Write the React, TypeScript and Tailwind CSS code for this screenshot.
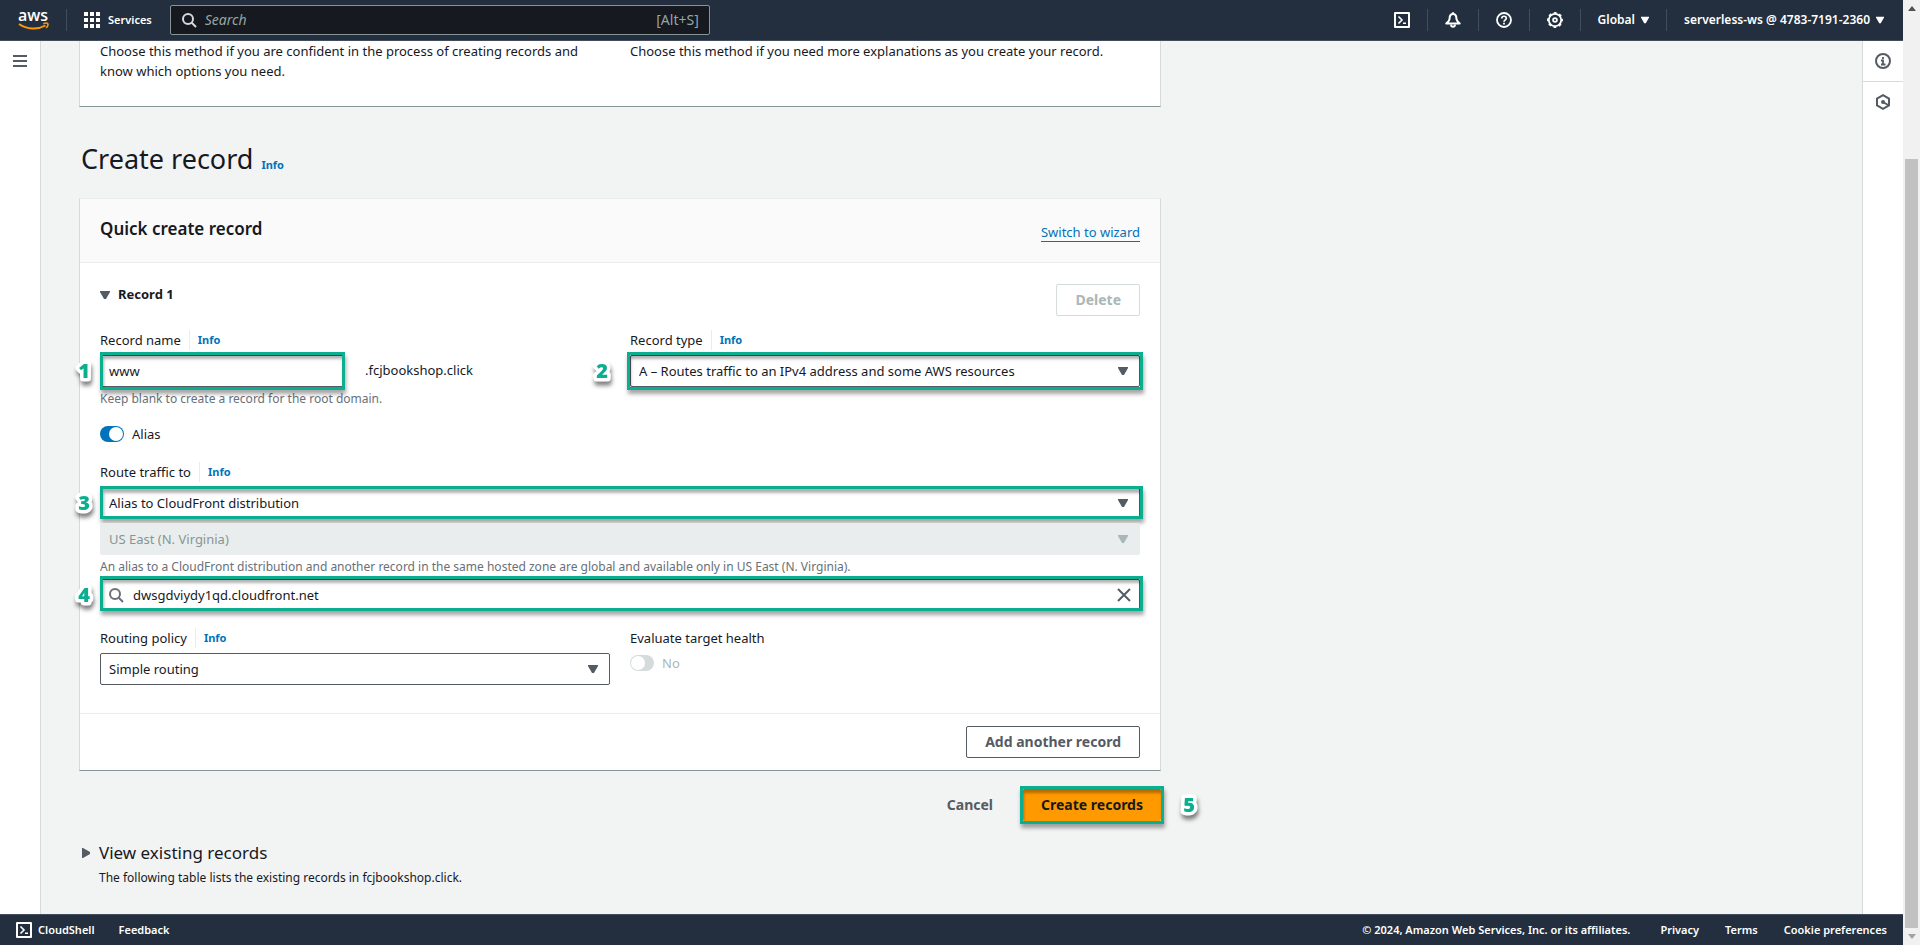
import React, { useState } from 'react';

const controlClass =
  'block h-8 w-full appearance-none rounded-[2px] border border-[#545b64] bg-white text-[13px] leading-5 text-[#16191f] outline-none';

const Caret = ({ className = 'w-2.5' }: { className?: string }) => (
  <svg viewBox="0 0 10 8" className={`h-2 ${className}`} fill="currentColor" aria-hidden="true">
    <path d="M0 0h10v1L6 8H4L0 1z" />
  </svg>
);

const SearchIcon = ({ className = '' }: { className?: string }) => (
  <svg viewBox="0 0 16 16" className={`size-4 ${className}`} fill="none" stroke="currentColor" strokeWidth="2" aria-hidden="true">
    <circle cx="7" cy="7" r="5" />
    <path d="m10.5 10.5 4.5 4.5" />
  </svg>
);

const ShellIcon = () => (
  <svg viewBox="0 0 16 16" className="size-4" fill="none" stroke="currentColor" strokeWidth="2" strokeLinejoin="round" aria-hidden="true">
    <path d="M1 1h14v14H1z" />
    <path d="M4.5 4.5 8 8l-3.5 3.5M9 11.200h3" strokeWidth="1.600" strokeLinejoin="miter" />
  </svg>
);

const BellIcon = () => (
  <svg viewBox="0 0 16 16" className="size-4" fill="none" stroke="currentColor" strokeWidth="2" strokeLinejoin="round" aria-hidden="true">
    <path d="M8 2C5.500 2 4.600 4 4.600 6.500 4.600 8.500 3 10 1.300 11.500h13.400C13 10 11.400 8.500 11.400 6.500 11.400 4 10.500 2 8 2z" />
    <path d="M8 .300V2M6 12.500c.200 3 3.800 3 4 0" />
  </svg>
);

const HelpIcon = () => (
  <svg viewBox="0 0 16 16" className="size-4" fill="none" stroke="currentColor" aria-hidden="true">
    <circle cx="8" cy="8" r="7" strokeWidth="1.800" />
    <path d="M5.800 6.400c0-2.900 4.500-2.800 4.500-.200C10.300 7.800 8 7.900 8 9.700" strokeWidth="1.700" />
    <path d="M8 10.700v1.700" strokeWidth="1.800" />
  </svg>
);

const GearIcon = () => (
  <svg viewBox="0 0 16 16" className="size-4" fill="none" stroke="currentColor" aria-hidden="true">
    <circle cx="8" cy="8" r="6.200" strokeWidth="1.800" />
    <circle cx="8" cy="8" r="7.200" strokeWidth="1.500" strokeDasharray="2.830 2.825" strokeDashoffset="1.400" />
    <circle cx="8" cy="8" r="1.900" strokeWidth="1.800" />
  </svg>
);

const AwsLogo = () => (
  <svg viewBox="0 0 32 36" className="h-9 w-8 overflow-visible" role="img" aria-label="AWS">
    <text x="0" y="19" fill="#fff" fontSize="16" fontWeight="600" fontFamily='"Open Sans", sans-serif'>aws</text>
    <path d="M1 22c8 5.500 18.500 6 26.500 1.500" fill="none" stroke="#f90" strokeWidth="2" />
    <path d="M25.300 21.700c2-.800 4-.800 4.500-.100.400.800-.200 3-1.600 4.500" fill="none" stroke="#f90" strokeWidth="1.500" />
  </svg>
);

const Divider = () => <span className="h-[22px] w-px bg-[#414d5c]" />;

function Badge({ value, className }: { value: number; className: string }) {
  return (
    <svg viewBox="0 0 24 32" className={`absolute h-8 w-6 overflow-visible drop-shadow-[1px_4px_2px_rgba(0,0,0,0.5)] ${className}`}>
      <text
        x="12"
        y="23"
        textAnchor="middle"
        fontFamily='"Open Sans", sans-serif'
        fontSize="20"
        fontWeight="800"
        fill="#0bae8f"
        stroke="#fff"
        strokeWidth="7"
        strokeLinejoin="round"
        paintOrder="stroke"
      >
        {value}
      </text>
    </svg>
  );
}

function Highlight({ className }: { className: string }) {
  return (
    <span
      className={`pointer-events-none absolute border-3 border-[#0bae8f] shadow-[1px_4px_4px_rgba(0,0,0,0.35),inset_1px_4px_3px_rgba(0,0,0,0.3)] ${className}`}
    />
  );
}

function FieldLabel({ htmlFor, children, info = true }: { htmlFor: string; children: React.ReactNode; info?: boolean }) {
  return (
    <div className="mb-[5px] flex h-5 items-center text-[13px] leading-5">
      <label htmlFor={htmlFor}>{children}</label>
      {info && (
        <a href="#info" className="ml-2 border-l border-[#eaeded] pl-2 text-[11px] font-bold text-[#0073bb]">
          Info
        </a>
      )}
    </div>
  );
}

function Select({ id, value, disabled }: { id: string; value: string; disabled?: boolean }) {
  return (
    <div className="relative">
      <select
        id={id}
        disabled={disabled}
        aria-label={value}
        className={`${controlClass} px-2 disabled:border-[#eaeded] disabled:bg-[#eaeded] disabled:text-[#879596] disabled:opacity-100`}
      >
        <option>{value}</option>
      </select>
      <Caret className={`pointer-events-none absolute top-3 right-3 w-2.5 ${disabled ? 'text-[#aab7b8]' : 'text-[#545b64]'}`} />
    </div>
  );
}

const toggleClass =
  'relative h-4 w-6 appearance-none rounded-full bg-[#d5dbdb] before:absolute before:top-px before:left-px before:size-3.5 before:rounded-full before:bg-white checked:bg-[#0073bb] checked:before:left-[9px]';

function Header() {
  return (
    <header className="flex h-[41px] shrink-0 items-center border-b border-[#414d5c] bg-[#232f3e] text-xs font-semibold text-white">
      <a href="#home" className="ml-[18px]"><AwsLogo /></a>
      <span className="ml-4 flex"><Divider /></span>
      <button className="ml-[17px] flex items-center gap-2 text-[11px]">
        <svg viewBox="0 0 16 16" className="size-4" fill="currentColor" aria-hidden="true">
          {[0, 6, 12].map((y) => [0, 6, 12].map((x) => <rect key={`${x}-${y}`} x={x} y={y} width="4" height="4" />))}
        </svg>
        Services
      </button>
      <label className="ml-[18px] flex h-[30px] w-[540px] items-center rounded-[2px] border border-[#879596] bg-[#16191f] px-2.5 text-sm font-normal text-[#95a5a6]">
        <SearchIcon className="text-[#d5dbdb]" />
        <input
          aria-label="Search"
          placeholder="Search"
          className="ml-2 min-w-0 flex-1 bg-transparent outline-none placeholder:text-[#95a5a6] placeholder:italic"
        />
        <span>[Alt+S]</span>
      </label>
      <div className="ml-auto flex items-center gap-[17px] pr-[19px]">
        <button aria-label="CloudShell"><ShellIcon /></button>
        <Divider />
        <button aria-label="Notifications"><BellIcon /></button>
        <Divider />
        <button aria-label="Help"><HelpIcon /></button>
        <Divider />
        <button aria-label="Settings"><GearIcon /></button>
        <Divider />
        <button className="flex items-center gap-1.5">Global <Caret className="w-2" /></button>
        <Divider />
        <button className="flex items-center gap-1.5">serverless-ws @ 4783-7191-2360 <Caret className="w-2" /></button>
      </div>
    </header>
  );
}

function RecordForm() {
  const [name, setName] = useState('www');
  const [alias, setAlias] = useState(true);
  const [target, setTarget] = useState('dwsgdviydy1qd.cloudfront.net');

  return (
    <div className="px-5 pt-[21px] pb-7">
      <div className="flex h-8 justify-between">
        <button className="flex h-[22px] items-center gap-2 text-[13px] font-bold">
          <Caret className="w-2.5 text-[#545b64]" />
          Record 1
        </button>
        <button disabled className="rounded-[2px] border border-[#d5dbdb] px-[18px] text-sm font-bold text-[#aab7b8]">
          Delete
        </button>
      </div>

      <div className="mt-3.5 grid grid-cols-2 gap-x-5">
        <div>
          <FieldLabel htmlFor="record-name">Record name</FieldLabel>
          <div className="grid grid-cols-2 items-center gap-5">
            <div className="relative">
              <input id="record-name" value={name} onChange={(e) => setName(e.target.value)} className={`${controlClass} px-2`} />
              <Highlight className="-top-[3px] right-0 -bottom-[3px] left-0" />
              <Badge value={1} className="top-0 -left-7" />
            </div>
            <span className="text-[13px]">.fcjbookshop.click</span>
          </div>
          <p className="mt-0.5 text-xs leading-5 text-[#687078]">Keep blank to create a record for the root domain.</p>
        </div>
        <div>
          <FieldLabel htmlFor="record-type">Record type</FieldLabel>
          <div className="relative">
            <Select id="record-type" value="A – Routes traffic to an IPv4 address and some AWS resources" />
            <Highlight className="-top-[3px] -right-[3px] -bottom-[3px] -left-[3px]" />
            <Badge value={2} className="top-0 -left-10" />
          </div>
        </div>
      </div>

      <label className="mt-[15px] flex items-center gap-2 text-[13px] leading-5">
        <input type="checkbox" role="switch" checked={alias} onChange={() => setAlias(!alias)} className={toggleClass} />
        Alias
      </label>

      <div className="mt-[18px]">
        <FieldLabel htmlFor="route-to">Route traffic to</FieldLabel>
        <div className="relative">
          <Select id="route-to" value="Alias to CloudFront distribution" />
          <Highlight className="-top-px -right-[3px] bottom-0 left-0" />
          <Badge value={3} className="top-0 -left-7" />
        </div>
        <div className="mt-1">
          <Select id="region" value="US East (N. Virginia)" disabled />
        </div>
        <p className="mt-0.5 text-xs leading-5 text-[#687078]">
          An alias to a CloudFront distribution and another record in the same hosted zone are global and available only in US East (N. Virginia).
        </p>
        <div className="relative mt-0.5">
          <input
            aria-label="Choose distribution"
            value={target}
            onChange={(e) => setTarget(e.target.value)}
            className={`${controlClass} px-8`}
          />
          <SearchIcon className="pointer-events-none absolute top-2 left-2 text-[#687078]" />
          <button aria-label="Clear" onClick={() => setTarget('')} className="absolute top-2 right-2 text-[#545b64]">
            <svg viewBox="0 0 16 16" className="size-4" fill="none" stroke="currentColor" strokeWidth="2" aria-hidden="true">
              <path d="m2 2 12 12M14 2 2 14" />
            </svg>
          </button>
          <Highlight className="-top-[3px] -right-[3px] bottom-0 left-0" />
          <Badge value={4} className="top-0 -left-7" />
        </div>
      </div>

      <div className="mt-[17px] grid grid-cols-2 gap-x-5">
        <div>
          <FieldLabel htmlFor="routing-policy">Routing policy</FieldLabel>
          <Select id="routing-policy" value="Simple routing" />
        </div>
        <div>
          <FieldLabel htmlFor="target-health" info={false}>Evaluate target health</FieldLabel>
          <div className="flex items-center gap-2 text-[13px] leading-5 text-[#aab7b8]">
            <input id="target-health" type="checkbox" role="switch" disabled className={toggleClass} />
            No
          </div>
        </div>
      </div>
    </div>
  );
}

export default function App() {
  return (
    <div className="flex h-screen bg-[#f2f3f3] font-['Noto_Sans',sans-serif] text-[#16191f]">
      <div className="flex min-w-0 flex-1 flex-col">
        <Header />

        <div className="flex min-h-0 flex-1">
          <nav className="w-[41px] shrink-0 border-r border-[#d5dbdb] bg-white">
            <button aria-label="Open navigation" className="mt-3.5 ml-[13px] block text-[#545b64]">
              <svg viewBox="0 0 14 12" className="h-3 w-3.5" fill="currentColor" aria-hidden="true">
                <path d="M0 0h14v2H0zM0 5h14v2H0zM0 10h14v2H0z" />
              </svg>
            </button>
          </nav>

          <main className="min-w-0 flex-1 overflow-hidden px-[38px]">
            <div className="max-w-[1082px]">
              <section className="grid grid-cols-2 gap-x-5 border border-t-0 border-[#d5dbdb] border-b-[#879596] bg-white px-5 pb-[25px] text-[13px] leading-5">
                <p>Choose this method if you are confident in the process of creating records and know which options you need.</p>
                <p>Choose this method if you need more explanations as you create your record.</p>
              </section>

              <div className="mt-[34px] flex items-baseline gap-2 pl-0.5">
                <h1 className="text-[27px] leading-9">Create record</h1>
                <a href="#info" className="text-[11px] font-bold text-[#0073bb]">Info</a>
              </div>

              <section className="mt-[21px] border border-[#d5dbdb] border-t-[#eaeded] border-b-[#879596] bg-white">
                <div className="flex h-16 items-start justify-between border-b border-[#eaeded] bg-[#fafafa] px-5 pt-[18px]">
                  <h2 className="text-[17px] leading-6 font-semibold">Quick create record</h2>
                  <a href="#wizard" className="mt-1.5 border-b border-[#0073bb] text-[13px] leading-[18px] text-[#0073bb]">Switch to wizard</a>
                </div>
                <RecordForm />
                <div className="flex justify-end border-t border-[#eaeded] px-5 py-3">
                  <button className="h-8 rounded-[2px] border border-[#545b64] px-[18px] text-sm font-bold text-[#545b64]">
                    Add another record
                  </button>
                </div>
              </section>

              <div className="mt-[18px] flex justify-end gap-3">
                <button className="h-8 px-[18px] text-sm font-bold text-[#545b64]">Cancel</button>
                <div className="relative">
                  <button className="block h-8 rounded-[2px] bg-[#f90] px-[18px] text-sm font-bold">Create records</button>
                  <Highlight className="-top-[3px] -right-[3px] -bottom-[3px] -left-[3px]" />
                  <Badge value={5} className="top-0 -right-10" />
                </div>
              </div>

              <div className="mt-5">
                <button className="flex items-center gap-2 pl-0.5 text-[17px] leading-6">
                  <Caret className="w-2.5 -rotate-90 text-[#545b64]" />
                  View existing records
                </button>
                <p className="ml-5 text-xs leading-[26px]">The following table lists the existing records in fcjbookshop.click.</p>
              </div>
            </div>
          </main>

          <aside className="w-[41px] shrink-0 border-l border-[#d5dbdb] bg-white text-[#545b64]">
            <button aria-label="Info panel" className="flex h-[41px] w-full items-center justify-center border-b border-[#d5dbdb]">
              <svg viewBox="0 0 16 16" className="size-4" fill="none" stroke="currentColor" strokeWidth="2" aria-hidden="true">
                <circle cx="8" cy="8" r="7" />
                <path d="M8 4v2M6 7.500h2V11M6 11.500h4.500" strokeWidth="1.800" />
              </svg>
            </button>
            <button aria-label="Tutorials" className="flex h-10 w-full items-center justify-center">
              <svg viewBox="0 0 16 16" className="size-4" fill="none" stroke="currentColor" strokeWidth="2" aria-hidden="true">
                <path d="m8 1.200 6 3.400v6.800l-6 3.400-6-3.400V4.600z" />
                <path d="m8 8 5 3" />
                <circle cx="8" cy="8" r="2" fill="currentColor" stroke="none" />
              </svg>
            </button>
          </aside>
        </div>

        <footer className="flex h-[31px] shrink-0 items-center border-t border-[#414d5c] bg-[#232f3e] px-4 text-[11px] font-semibold text-white">
          <button className="flex items-center gap-1.5"><ShellIcon /> CloudShell</button>
          <a href="#feedback" className="ml-6">Feedback</a>
          <span className="ml-auto">© 2024, Amazon Web Services, Inc. or its affiliates.</span>
          <a href="#privacy" className="ml-[30px]">Privacy</a>
          <a href="#terms" className="ml-[26px]">Terms</a>
          <a href="#cookies" className="ml-[26px]">Cookie preferences</a>
        </footer>
      </div>

      <div aria-hidden="true" className="flex w-[17px] shrink-0 flex-col items-center bg-[#f1f1f1] py-1.5">
        <svg viewBox="0 0 8 5" className="h-[5px] w-2" fill="#505050"><path d="M4 0 8 5H0z" /></svg>
        <div className="mt-[148px] w-[13px] flex-1 bg-[#c1c1c1]" />
        <svg viewBox="0 0 8 5" className="mt-1.5 h-[5px] w-2" fill="#a3a3a3"><path d="M4 5 0 0h8z" /></svg>
      </div>
    </div>
  );
}
